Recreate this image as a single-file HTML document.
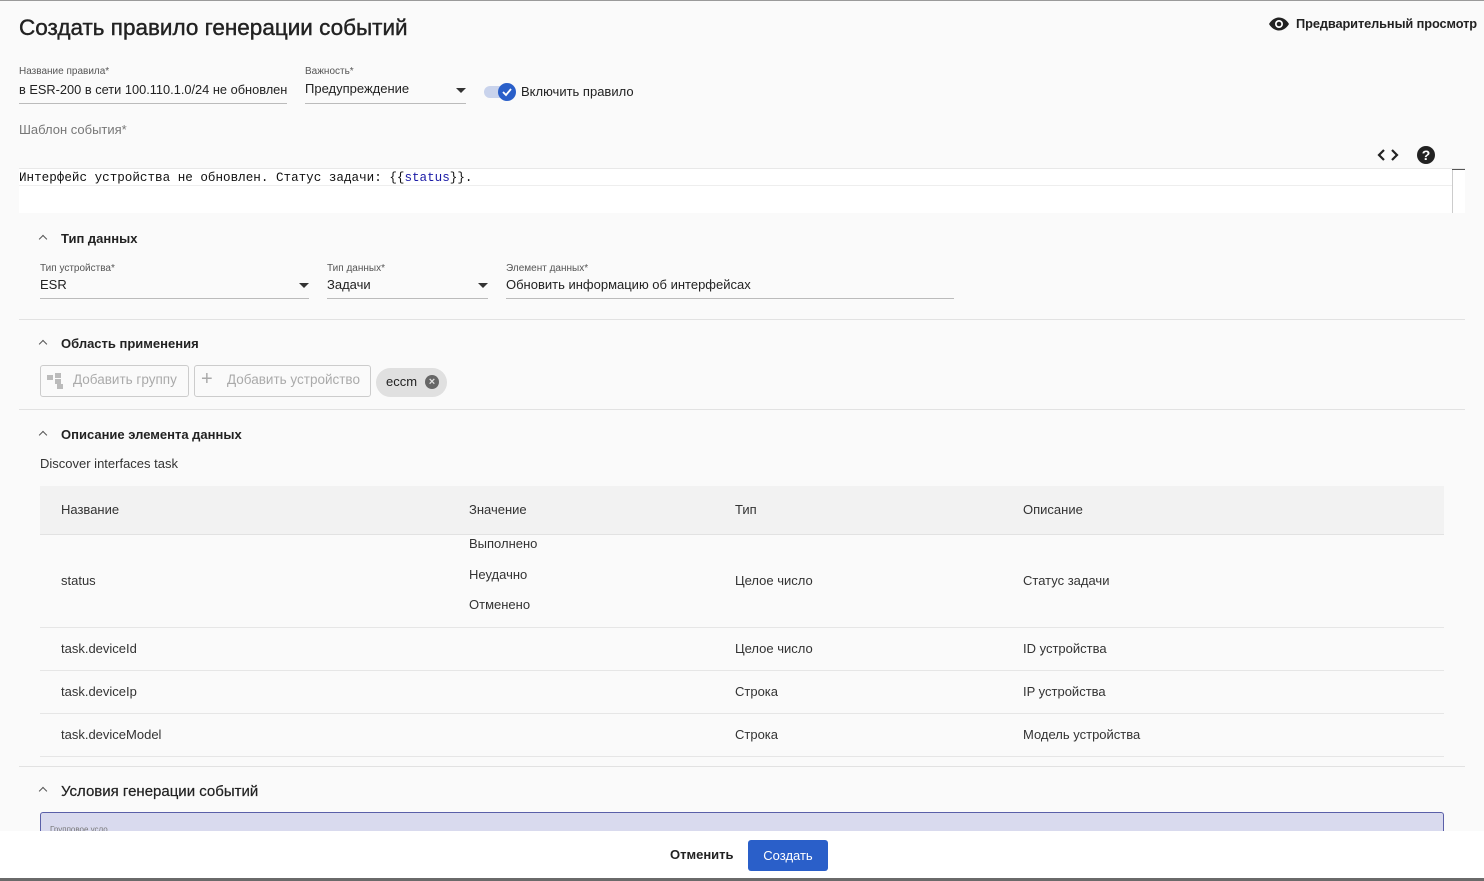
<!DOCTYPE html>
<html><head><meta charset="utf-8"><style>
*{box-sizing:border-box;margin:0;padding:0}
body{width:1484px;height:880px;background:#fafafa;font-family:"Liberation Sans","DejaVu Sans",sans-serif;color:#222;position:relative;overflow:hidden;border-top:1px solid #9a9a9a}
.a{position:absolute;white-space:nowrap}
.lbl{font-size:10px;color:#555}
.val{font-size:13px;color:#222}
.line{position:absolute;height:1px;background:#bbb}
.caret{position:absolute;width:0;height:0;border-left:5px solid transparent;border-right:5px solid transparent;border-top:5px solid #333}
.sec{font-size:13px;font-weight:bold;color:#222}
.chev{position:absolute;width:6px;height:6px;border-left:1.3px solid #555;border-top:1.3px solid #555;transform:rotate(45deg)}
.hr{position:absolute;left:19px;width:1446px;height:1px;background:#e2e2e2}
.t{font-size:13px;color:#333}
</style></head><body>
<div class="a" style="left:19px;top:14px;font-size:22.5px;color:#222;-webkit-text-stroke:0.4px #222">Создать правило генерации событий</div>
<svg class="a" style="left:1268px;top:16px" width="22" height="14" viewBox="0 0 22 14"><path d="M1 7C4 2 8 0.5 11 0.5S18 2 21 7C18 12 14 13.5 11 13.5S4 12 1 7Z" fill="#222"/><circle cx="11" cy="7" r="4" fill="#fff"/><circle cx="11" cy="7" r="2.3" fill="#222"/></svg>
<div class="a" style="left:1296px;top:15px;font-size:12.8px;font-weight:bold;color:#222;letter-spacing:-0.1px">Предварительный просмотр</div>

<div class="a lbl" style="left:19px;top:65px">Название правила*</div>
<div class="a val" style="left:19px;top:81px;font-size:12.8px">в ESR-200 в сети 100.110.1.0/24 не обновлен</div>
<div class="line" style="left:19px;top:102px;width:268px"></div>
<div class="a lbl" style="left:305px;top:65px">Важность*</div>
<div class="a val" style="left:305px;top:80px">Предупреждение</div>
<div class="caret" style="left:456px;top:87px"></div>
<div class="line" style="left:305px;top:102px;width:161px"></div>
<div class="a" style="left:484px;top:85px;width:26px;height:12px;border-radius:6px;background:#c9d3ec"></div>
<div class="a" style="left:498px;top:82px;width:18px;height:18px;border-radius:50%;background:#2a5fc9"></div>
<svg class="a" style="left:501px;top:86px" width="12" height="10"><path d="M2 5L5 8L10 2" stroke="#fff" stroke-width="1.8" fill="none"/></svg>
<div class="a val" style="left:521px;top:83px">Включить правило</div>

<div class="a" style="left:19px;top:121px;font-size:13px;color:#777">Шаблон события*</div>
<svg class="a" style="left:1377px;top:147px" width="22" height="14"><path d="M7 2L2 7L7 12M15 2L20 7L15 12" stroke="#222" stroke-width="2.2" fill="none"/></svg>
<div class="a" style="left:1417px;top:145px;width:18px;height:18px;border-radius:50%;background:#222;color:#fff;font-size:14px;font-weight:bold;text-align:center;line-height:18px">?</div>
<div class="a" style="left:19px;top:167px;width:1446px;height:45px;background:#fff;border-top:1px solid #e8e8e8"></div>
<div class="a" style="left:19px;top:184px;width:1433px;height:1px;background:#eee"></div>
<div class="a" style="left:1452px;top:168px;width:1px;height:44px;background:#ccc"></div>
<div class="a" style="left:1452px;top:168px;width:13px;height:1px;background:#555"></div>
<div class="a" style="left:19px;top:170px;font-family:'Liberation Mono',monospace;font-size:12.6px;color:#111">Интерфейс устройства не обновлен. Статус задачи: {{<span style="color:#1a1aa6">status</span>}}.</div>

<div class="chev" style="left:40px;top:235px"></div>
<div class="a sec" style="left:61px;top:230px">Тип данных</div>
<div class="a lbl" style="left:40px;top:262px">Тип устройства*</div>
<div class="a val" style="left:40px;top:276px">ESR</div>
<div class="caret" style="left:299px;top:282px"></div>
<div class="line" style="left:40px;top:297px;width:269px"></div>
<div class="a lbl" style="left:327px;top:262px">Тип данных*</div>
<div class="a val" style="left:327px;top:276px">Задачи</div>
<div class="caret" style="left:478px;top:282px"></div>
<div class="line" style="left:327px;top:297px;width:161px"></div>
<div class="a lbl" style="left:506px;top:262px">Элемент данных*</div>
<div class="a val" style="left:506px;top:276px">Обновить информацию об интерфейсах</div>
<div class="line" style="left:506px;top:297px;width:448px"></div>
<div class="hr" style="top:318px"></div>

<div class="chev" style="left:40px;top:340px"></div>
<div class="a sec" style="left:61px;top:335px">Область применения</div>
<div class="a" style="left:40px;top:364px;width:149px;height:32px;border:1px solid #ccc;border-radius:3px"></div>
<svg class="a" style="left:46px;top:371px" width="20" height="18"><rect x="1" y="3" width="6" height="5" fill="#bbb"/><rect x="9" y="1" width="6" height="5" fill="#bbb"/><rect x="9" y="7" width="6" height="5" fill="#bbb"/><rect x="11" y="12" width="6" height="5" fill="#bbb"/></svg>
<div class="a" style="left:73px;top:371px;font-size:13.5px;color:#aaa">Добавить группу</div>
<div class="a" style="left:194px;top:364px;width:177px;height:32px;border:1px solid #ccc;border-radius:3px"></div>
<div class="a" style="left:201px;top:367px;font-size:20px;color:#aaa">+</div>
<div class="a" style="left:227px;top:371px;font-size:13.5px;color:#aaa">Добавить устройство</div>
<div class="a" style="left:376px;top:367px;width:71px;height:29px;border-radius:15px;background:#e0e0e0"></div>
<div class="a" style="left:386px;top:373px;font-size:13px;color:#222">eccm</div>
<div class="a" style="left:425px;top:374px;width:14px;height:14px;border-radius:50%;background:#666;color:#e0e0e0;font-size:11px;font-weight:bold;text-align:center;line-height:14px">×</div>
<div class="hr" style="top:408px"></div>

<div class="chev" style="left:40px;top:431px"></div>
<div class="a sec" style="left:61px;top:426px">Описание элемента данных</div>
<div class="a t" style="left:40px;top:455px">Discover interfaces task</div>
<div class="a" style="left:40px;top:485px;width:1404px;height:49px;background:#f2f2f2;border-bottom:1px solid #e2e2e2"></div>
<div class="a t" style="left:61px;top:501px">Название</div>
<div class="a t" style="left:469px;top:501px">Значение</div>
<div class="a t" style="left:735px;top:501px">Тип</div>
<div class="a t" style="left:1023px;top:501px">Описание</div>
<div class="a t" style="left:469px;top:535px">Выполнено</div>
<div class="a t" style="left:61px;top:572px">status</div>
<div class="a t" style="left:469px;top:566px">Неудачно</div>
<div class="a t" style="left:735px;top:572px">Целое число</div>
<div class="a t" style="left:1023px;top:572px">Статус задачи</div>
<div class="a t" style="left:469px;top:596px">Отменено</div>
<div class="a" style="left:40px;top:626px;width:1404px;height:1px;background:#e6e6e6"></div>
<div class="a t" style="left:61px;top:640px">task.deviceId</div>
<div class="a t" style="left:735px;top:640px">Целое число</div>
<div class="a t" style="left:1023px;top:640px">ID устройства</div>
<div class="a" style="left:40px;top:669px;width:1404px;height:1px;background:#e6e6e6"></div>
<div class="a t" style="left:61px;top:683px">task.deviceIp</div>
<div class="a t" style="left:735px;top:683px">Строка</div>
<div class="a t" style="left:1023px;top:683px">IP устройства</div>
<div class="a" style="left:40px;top:712px;width:1404px;height:1px;background:#e6e6e6"></div>
<div class="a t" style="left:61px;top:726px">task.deviceModel</div>
<div class="a t" style="left:735px;top:726px">Строка</div>
<div class="a t" style="left:1023px;top:726px">Модель устройства</div>
<div class="a" style="left:40px;top:755px;width:1404px;height:1px;background:#e6e6e6"></div>
<div class="hr" style="top:765px"></div>

<div class="chev" style="left:40px;top:787px"></div>
<div class="a" style="left:61px;top:782px;font-size:15px;color:#222;-webkit-text-stroke:0.2px #222">Условия генерации событий</div>
<div class="a" style="left:40px;top:811px;width:1404px;height:20px;background:#d9daee;border:1px solid #5a5fa8;border-bottom:none;border-radius:3px 3px 0 0"></div>
<div class="a" style="left:50px;top:824px;font-size:8px;color:#777">Групповое усло</div>
<div class="a" style="left:0;top:830px;width:1484px;height:48px;background:#fff"></div>
<div class="a" style="left:670px;top:846px;font-size:13px;font-weight:bold;color:#222">Отменить</div>
<div class="a" style="left:748px;top:839px;width:80px;height:31px;background:#2a5fc9;border-radius:3px;color:#fff;font-size:13px;text-align:center;line-height:31px">Создать</div>
<div class="a" style="left:0;top:877px;width:1484px;height:3px;background:#6a6a6a"></div>
</body></html>
